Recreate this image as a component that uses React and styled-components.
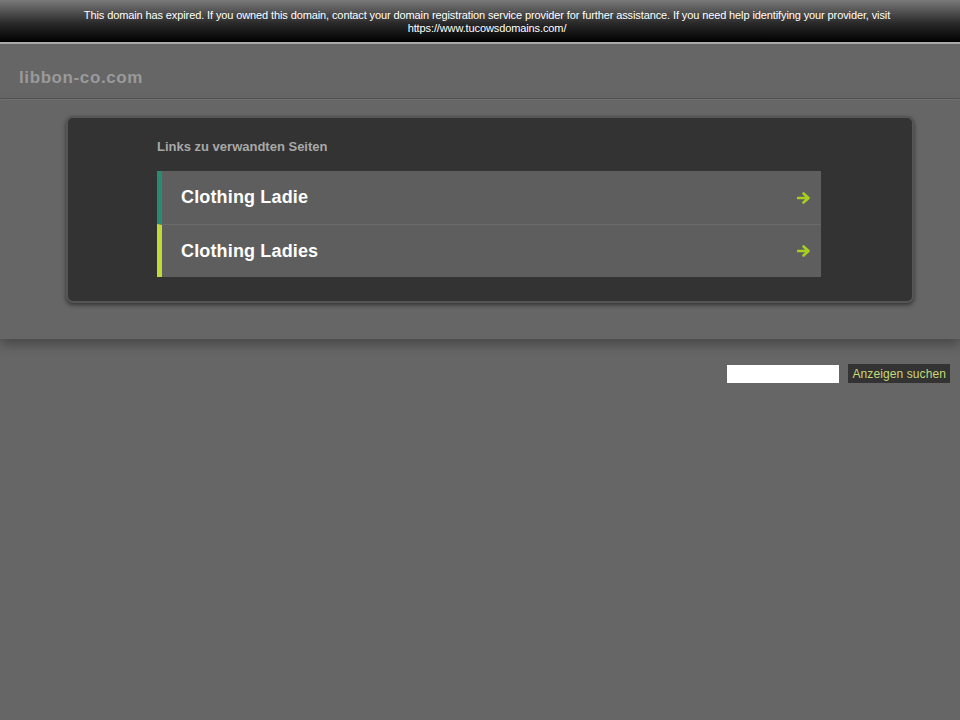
import React from 'react';
import styled, { createGlobalStyle } from 'styled-components';

const GlobalStyle = createGlobalStyle`
  html, body {
    margin: 0;
    padding: 0;
    background: #666;
    font-family: "Liberation Sans", Arial, sans-serif;
  }
`;

const links = [
  { label: 'Clothing Ladie', accent: '#2b8a72' },
  { label: 'Clothing Ladies', accent: '#c3d93a' },
];

const App = () => {
  return (
    <Page>
      <GlobalStyle />
      <ExpiredBar>
        This domain has expired. If you owned this domain, contact your domain registration service provider for further assistance. If you need help identifying your provider, visit https://www.tucowsdomains.com/
      </ExpiredBar>
      <Header>
        <DomainTitle>libbon-co.com</DomainTitle>
      </Header>
      <Content>
        <Panel>
          <PanelInner>
            <Heading>Links zu verwandten Seiten</Heading>
            <LinkList>
              {links.map((link, key) => (
                <LinkRow key={key} $accent={link.accent} $first={key === 0}>
                  <LinkText>{link.label}</LinkText>
                  <Arrow viewBox="0 0 14 12">
                    <path d="M1 6h8M6.5 1.5L11.5 6l-5 4.5" fill="none" stroke="#a6d020" strokeWidth="2.6" strokeLinecap="round" strokeLinejoin="round" />
                  </Arrow>
                </LinkRow>
              ))}
            </LinkList>
          </PanelInner>
        </Panel>
      </Content>
      <SearchBar>
        <SearchInput type="text" />
        <SearchButton>Anzeigen suchen</SearchButton>
      </SearchBar>
    </Page>
  );
};

export default App;

//PAGE
const Page = styled.div`
  min-height: 720px;
  background: #666;
`;

const ExpiredBar = styled.div`
  height: 44px;
  box-sizing: border-box;
  padding: 9px 56px 0 70px;
  background: linear-gradient(#7a7a7a, #2a2a2a 55%, #000);
  border-bottom: 2px solid #a9a9a9;
  color: #fff;
  font-size: 11px;
  line-height: 13px;
  letter-spacing: -0.11px;
  text-align: center;
`;

const Header = styled.div`
  height: 55px;
  box-sizing: border-box;
  padding: 24px 19px 0;
  border-bottom: 1px solid #555;
`;

const DomainTitle = styled.div`
  color: #9a9a9a;
  font-size: 17px;
  font-weight: bold;
  letter-spacing: 0.6px;
`;

const Content = styled.div`
  padding: 16px 46px 36px 66px;
  border-top: 1px solid #707070;
  box-shadow: 0 6px 10px rgba(0, 0, 0, 0.28);
`;

const Panel = styled.div`
  background: #333;
  border: 2px solid #555;
  border-radius: 7px;
  box-shadow: 0 2px 4px rgba(0, 0, 0, 0.5);
`;

const PanelInner = styled.div`
  padding: 21px 91px 24px 89px;
`;

const Heading = styled.div`
  color: #a8a8a8;
  font-size: 13px;
  font-weight: bold;
  margin-bottom: 17px;
`;

const LinkList = styled.div`
  display: flex;
  flex-direction: column;
`;

const LinkRow = styled.div`
  display: flex;
  align-items: center;
  justify-content: space-between;
  height: 53px;
  box-sizing: border-box;
  padding: 0 10px 0 19px;
  background: #5e5e5e;
  border-left: 5px solid ${props => props.$accent};
  border-top: ${props => (props.$first ? 'none' : '1px solid #6b6b6b')};
`;

const LinkText = styled.span`
  color: #fff;
  font-size: 18px;
  font-weight: bold;
  letter-spacing: 0.15px;
`;

const Arrow = styled.svg`
  width: 14px;
  height: 12px;
`;

const SearchBar = styled.div`
  display: flex;
  justify-content: flex-end;
  align-items: center;
  gap: 9px;
  padding: 25px 10px 0 0;
`;

const SearchInput = styled.input`
  width: 112px;
  height: 18px;
  box-sizing: border-box;
  border: none;
  background: #fff;
  padding: 0 4px;
`;

const SearchButton = styled.button`
  height: 19px;
  padding: 0 4px;
  background: #333;
  border: none;
  color: #c8d878;
  font-family: "Liberation Sans", Arial, sans-serif;
  font-size: 12px;
  letter-spacing: 0.1px;
`;
